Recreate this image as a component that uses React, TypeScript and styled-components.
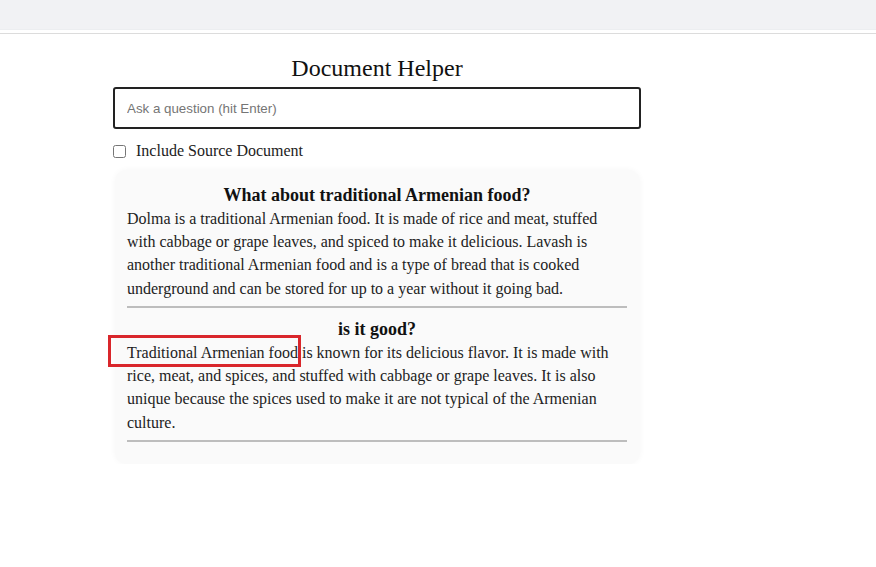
import React from "react";
import styled, { createGlobalStyle } from "styled-components";

const Global = createGlobalStyle`
  html, body { margin: 0; padding: 0; background: #ffffff; }
  body { font-family: "Liberation Serif", "Times New Roman", serif; color: #111; }
`;

const TopBar = styled.div`
  height: 29px;
  background: #f1f2f4;
  border-bottom: 1px solid #eceef0;
`;

const Divider = styled.div`
  margin-top: 3px;
  height: 1px;
  background: #dcdcdc;
`;

const Column = styled.main`
  width: 528px;
  margin-left: 113px;
  display: flex;
  flex-direction: column;
`;

const Title = styled.h1`
  margin: 20px 0 0;
  font-size: 24px;
  font-weight: normal;
  line-height: 28px;
  text-align: center;
  color: #111;
`;

const QuestionInput = styled.input`
  box-sizing: border-box;
  margin-top: 5px;
  width: 528px;
  height: 42px;
  border: 2px solid #222;
  border-radius: 3px;
  padding: 0 12px;
  font-family: "Liberation Sans", Arial, sans-serif;
  font-size: 13.33px;
  color: #222;
  outline: none;
  &::placeholder { color: #757575; }
`;

const CheckRow = styled.label`
  display: flex;
  align-items: center;
  gap: 10px;
  margin-top: 13px;
  font-size: 16px;
  line-height: 18px;
  color: #222;
`;

const Box = styled.input`
  margin: 0;
  width: 13px;
  height: 13px;
`;

const Card = styled.section`
  margin: 10px 1px 0 2px;
  padding: 15px 13px 11px 12px;
  background: #fafafa;
  border-radius: 12px;
  box-shadow: 0 0 6px rgba(0, 0, 0, 0.04);
`;

const Question = styled.h2`
  margin: 0;
  font-size: 18px;
  line-height: 20px;
  font-weight: bold;
  text-align: center;
  color: #111;
`;

const Answer = styled.p`
  position: relative;
  margin: 1.5px 0 0;
  font-size: 16px;
  line-height: 23.4px;
  color: #222;
`;

const Rule = styled.hr`
  margin: 6px 0 11px;
  border: none;
  height: 2px;
  background: #bdbdbd;
`;

const Highlight = styled.span`
  position: absolute;
  left: -19px;
  top: -6px;
  width: 193px;
  height: 32px;
  box-sizing: border-box;
  border: 3px solid #d9262b;
  pointer-events: none;
`;

const items = [
  {
    q: "What about traditional Armenian food?",
    a: "Dolma is a traditional Armenian food. It is made of rice and meat, stuffed with cabbage or grape leaves, and spiced to make it delicious. Lavash is another traditional Armenian food and is a type of bread that is cooked underground and can be stored for up to a year without it going bad.",
    marked: false,
  },
  {
    q: "is it good?",
    a: "Traditional Armenian food is known for its delicious flavor. It is made with rice, meat, and spices, and stuffed with cabbage or grape leaves. It is also unique because the spices used to make it are not typical of the Armenian culture.",
    marked: true,
  },
];

export default function App() {
  return (
    <>
      <Global />
      <TopBar />
      <Divider />
      <Column>
        <Title>Document Helper</Title>
        <QuestionInput placeholder="Ask a question (hit Enter)" />
        <CheckRow>
          <Box type="checkbox" />
          Include Source Document
        </CheckRow>
        <Card>
          {items.map((it) => (
            <div key={it.q}>
              <Question>{it.q}</Question>
              <Answer>
                {it.a}
                {it.marked && <Highlight />}
              </Answer>
              <Rule />
            </div>
          ))}
        </Card>
      </Column>
    </>
  );
}
